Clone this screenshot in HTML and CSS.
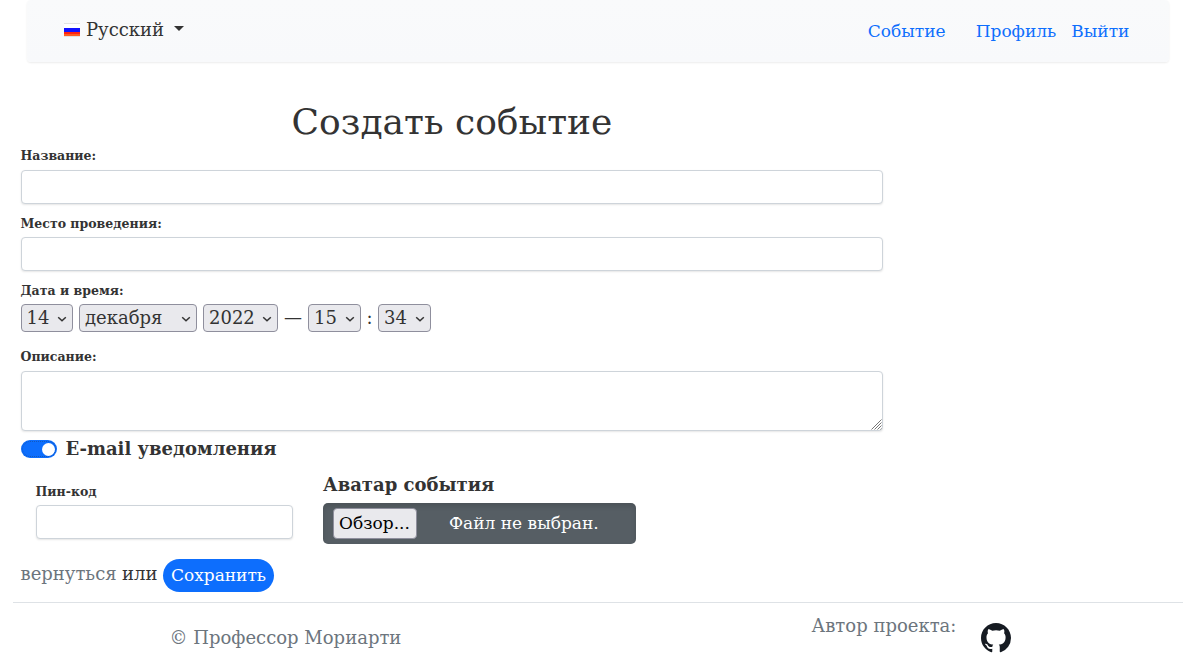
FILE: index.html
```
<!DOCTYPE html>
<html lang="ru">
<head>
<meta charset="utf-8">
<title>Создать событие</title>
<link rel="stylesheet" href="styles.css">
</head>
<body>
<header class="navbar">
  <a class="language" href="#">
    <svg class="flag" width="16" height="14" viewBox="0 0 16 14" shape-rendering="crispEdges"><path fill="#e2e2e2" d="M0 0h16v14H0z"/><path fill="#fff" d="M0 1h16v4H0z"/><path fill="#1212ff" d="M0 5h16v4H0z"/><path fill="#ff2211" d="M0 9h16v2H0z"/><path fill="#ff5a22" d="M0 11h16v2H0z"/></svg>
    <span class="language-name">Русский</span>
    <span class="caret"></span>
  </a>
  <nav class="links">
    <a class="link event-link" href="#">Событие</a>
    <a class="link" href="#">Профиль</a>
    <a class="link" href="#">Выйти</a>
  </nav>
</header>

<main class="content">
  <h1 class="title">Создать событие</h1>
  <form class="event-form">
    <label class="label" for="name">Название:</label>
    <input class="control" id="name" type="text">
    <label class="label place-label" for="place">Место проведения:</label>
    <input class="control" id="place" type="text">
    <span class="label date-label">Дата и время:</span>
    <div class="date-row">
      <span class="picker day"><select class="select"><option>14</option></select><svg class="chevron" viewBox="0 0 10 6"><path d="M1.2 1.2 5 4.8 8.8 1.2"/></svg></span>
      <span class="picker month"><select class="select"><option>декабря</option></select><svg class="chevron" viewBox="0 0 10 6"><path d="M1.2 1.2 5 4.8 8.8 1.2"/></svg></span>
      <span class="picker year"><select class="select"><option>2022</option></select><svg class="chevron" viewBox="0 0 10 6"><path d="M1.2 1.2 5 4.8 8.8 1.2"/></svg></span>
      <span class="dash">—</span>
      <span class="picker time"><select class="select"><option>15</option></select><svg class="chevron" viewBox="0 0 10 6"><path d="M1.2 1.2 5 4.8 8.8 1.2"/></svg></span>
      <span class="colon">:</span>
      <span class="picker time"><select class="select"><option>34</option></select><svg class="chevron" viewBox="0 0 10 6"><path d="M1.2 1.2 5 4.8 8.8 1.2"/></svg></span>
    </div>
    <label class="label about-label" for="about">Описание:</label>
    <div class="textarea-box">
      <textarea class="control textarea" id="about"></textarea>
      <svg class="grip" width="11" height="11" viewBox="0 0 11 11"><path d="M.5 10.5l10-10M3.5 10.5l7-7M6.5 10.5l4-4M9.5 10.5l1-1"/></svg>
    </div>
    <div class="switch-row">
      <span class="switch"><span class="knob"></span></span>
      <span class="strong">E-mail уведомления</span>
    </div>
    <div class="columns">
      <div class="pin">
        <label class="label" for="pin">Пин-код</label>
        <input class="control" id="pin" type="text">
      </div>
      <div class="avatar">
        <span class="strong avatar-label">Аватар события</span>
        <div class="file">
          <button class="browse" type="button">Обзор...</button>
          <span class="file-name">Файл не выбран.</span>
        </div>
      </div>
    </div>
    <div class="actions">
      <a class="back" href="#">вернуться</a>
      <span class="or">или</span>
      <button class="save" type="button">Сохранить</button>
    </div>
  </form>
</main>

<footer class="footer">
  <span class="copyright">© Профессор Мориарти</span>
  <span class="author">Автор проекта:</span>
  <svg class="github" width="30" height="30" viewBox="0 0 16 16"><path fill="#161b22" d="M8 0C3.58 0 0 3.58 0 8c0 3.54 2.29 6.53 5.47 7.59.4.07.55-.17.55-.38 0-.19-.01-.82-.01-1.49-2.01.37-2.53-.49-2.69-.94-.09-.23-.48-.94-.82-1.13-.28-.15-.68-.52-.01-.53.63-.01 1.08.58 1.23.82.72 1.21 1.87.87 2.33.66.07-.52.28-.87.51-1.07-1.78-.2-3.64-.89-3.64-3.95 0-.87.31-1.59.82-2.15-.08-.2-.36-1.02.08-2.12 0 0 .67-.21 2.2.82.64-.18 1.32-.27 2-.27s1.36.09 2 .27c1.53-1.04 2.2-.82 2.2-.82.44 1.1.16 1.92.08 2.12.51.56.82 1.27.82 2.15 0 3.07-1.87 3.75-3.65 3.95.29.25.54.73.54 1.48 0 1.07-.01 1.93-.01 2.2 0 .21.15.46.55.38A8.01 8.01 0 0 0 16 8c0-4.42-3.58-8-8-8z"/></svg>
</footer>
</body>
</html>
```

FILE: styles.css
```
* { box-sizing: border-box; }
body {
  margin: 0;
  height: 665px;
  overflow: hidden;
  background: #fff;
  color: #333;
  font-family: "DejaVu Serif", serif;
  font-size: 18px;
  line-height: 24px;
}
a { text-decoration: none; }

.navbar {
  display: flex;
  justify-content: space-between;
  align-items: flex-start;
  height: 62px;
  margin: 0 31px 0 27px;
  padding: 18px 39.6px 0 37px;
  border-radius: 4px;
  background: linear-gradient(#f9fafb, #f8f9fb);
  box-shadow: 0 1px 2px rgba(0, 0, 0, .08);
}
.language { display: flex; color: #333; }
.flag { margin-top: 5px; }
.language-name { margin-left: 6px; }
.caret {
  margin: 8px 0 0 10px;
  height: 0;
  border: 5px solid transparent;
  border-top-color: #333;
  border-bottom: 0;
}
.links { display: flex; gap: 15px; padding-top: 1px; font-size: 17px; }
.link { color: #0d6efd; }
.event-link { margin-right: 15px; }

.content { width: 862px; margin-left: 21px; }
.title {
  margin: 36px 0 0;
  padding-top: 2px;
  height: 49px;
  font-size: 36px;
  line-height: 44px;
  font-weight: 400;
  text-align: center;
}
.event-form { display: flex; flex-direction: column; }
.label {
  display: block;
  height: 23px;
  margin-left: -.5px;
  font-size: 12.5px;
  line-height: 18px;
  font-weight: 700;
}
.control {
  display: block;
  width: 100%;
  height: 34px;
  padding: 6px 12px;
  border: 1px solid #ced4da;
  border-radius: 4px;
  outline: none;
  background: #fff;
  box-shadow: 0 1px 2px rgba(0, 0, 0, .1);
  font: inherit;
}
.place-label { height: 22px; margin-top: 11px; }
.date-label { height: 22px; margin-top: 11px; }
.date-row { display: flex; height: 28px; }
.picker {
  display: grid;
  align-items: center;
  height: 28px;
  border: 1px solid #8f8f9d;
  border-radius: 4px;
  background: #e9e9ed;
}
.select {
  grid-area: 1 / 1;
  width: 100%;
  height: 26px;
  padding: 0 0 1px 5px;
  border: 0;
  appearance: none;
  background: none;
  color: #333;
  font: inherit;
  line-height: 24px;
}
.chevron {
  grid-area: 1 / 1;
  justify-self: end;
  width: 10px;
  height: 6px;
  margin: 2px 5px 0 0;
  fill: none;
  stroke: #333;
  stroke-width: 1.5;
  pointer-events: none;
}
.day { width: 52px; }
.day .select { padding-left: 4.5px; }
.month { width: 118px; margin-left: 6px; }
.year { width: 75px; margin-left: 6px; }
.time { width: 53px; }
.dash { width: 30px; padding-top: 2px; text-align: center; }
.colon { width: 17px; padding-top: 2px; text-align: center; }
.about-label { margin-top: 16px; }
.textarea-box { display: grid; }
.textarea { grid-area: 1 / 1; height: 60px; resize: none; }
.grip {
  grid-area: 1 / 1;
  place-self: end;
  margin: 0 1px 1px 0;
  fill: none;
  stroke: #777;
  stroke-width: 1;
}
.switch-row { display: flex; align-items: center; gap: 8.4px; height: 24px; margin-top: 6px; }
.switch {
  display: flex;
  justify-content: flex-end;
  align-items: center;
  width: 36px;
  height: 18px;
  padding-right: 2.5px;
  border-radius: 9px;
  background: #0d6efd;
  outline: 1px dotted #1459bd;
  outline-offset: -2px;
}
.knob { width: 13px; height: 13px; border-radius: 50%; background: #fff; }
.strong { font-weight: 700; }
.columns { display: flex; gap: 30px; height: 83px; margin-top: 11px; padding-left: 15px; }
.pin { width: 257px; padding-top: 11px; }
.pin .label { height: 22px; }
.avatar { width: 313px; }
.avatar-label { display: block; height: 31px; padding-top: 1px; }
.file {
  display: flex;
  align-items: center;
  height: 41px;
  padding-left: 10px;
  border-radius: 5px;
  background: #565e64;
  box-shadow: inset 0 3px 5px rgba(0, 0, 0, .125);
  color: #fff;
  font-size: 17px;
}
.browse {
  width: 84px;
  height: 31px;
  padding: 0 1px 2px 0;
  border: 1px solid #8f8f9d;
  border-radius: 4px;
  background: #e9e9ed;
  color: #000;
  font: inherit;
}
.file-name { margin-left: 32px; padding-bottom: 2px; }
.actions { display: flex; margin-top: 4px; height: 33px; }
.back { margin-left: -.5px; padding-top: 3px; color: #6c757d; }
.or { margin: 3px 5px 0 5.5px; }
.save {
  width: 111px;
  height: 33px;
  padding: 0 0 2px 1px;
  border: 0;
  border-radius: 17px;
  background: #0d6efd;
  color: #fff;
  font: inherit;
  font-size: 17px;
}

.footer {
  display: flex;
  align-items: flex-start;
  height: 62px;
  margin: 10px 17px 0 13px;
  border-top: 1px solid #dee2e6;
  color: #6c757d;
}
.copyright { width: 642px; margin: 23px 0 0 156.6px; }
.author { width: 169.4px; margin-top: 11px; }
.github { margin-top: 20px; }
```
